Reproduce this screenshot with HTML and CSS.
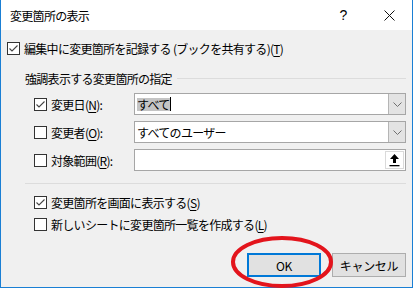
FILE: index.html
```html
<!DOCTYPE html>
<html lang="ja">
<head>
    <meta charset="UTF-8">
    <meta name="viewport" content="width=device-width, initial-scale=1.0">
    <title>変更箇所の表示</title>
    <link rel="stylesheet" href="styles.css">
</head>
<body>

    <div class="dialog">
        <!-- Title bar -->
        <div class="titlebar">
            <span class="title">変更箇所の表示</span>
            <span class="help">?</span>
            <span class="close">
                <svg width="11" height="11" viewBox="0 0 11 11"><path d="M0.5 0.5 L10.5 10.5 M10.5 0.5 L0.5 10.5" stroke="#111" stroke-width="1" fill="none"/></svg>
            </span>
        </div>

        <div class="content">
            <label class="check main-check">
                <span class="box"><svg width="11" height="11" viewBox="0 0 11 11"><path d="M1.5 5.5 L4 8 L9.5 2.5" stroke="#444" stroke-width="1.1" fill="none"/></svg></span>
                編集中に変更箇所を記録する (ブックを共有する)(<u>T</u>)
            </label>

            <!-- Highlight options group -->
            <div class="group-head">
                <span>強調表示する変更箇所の指定</span>
                <span class="rule"></span>
            </div>

            <div class="fields">
                <div class="field">
                    <label class="check field-label">
                        <span class="box"><svg width="11" height="11" viewBox="0 0 11 11"><path d="M1.5 5.5 L4 8 L9.5 2.5" stroke="#444" stroke-width="1.1" fill="none"/></svg></span>
                        変更日(<u>N</u>):
                    </label>
                    <div class="combo">
                        <div class="combo-text"><span class="selected">すべて</span><span class="caret"></span></div>
                        <div class="combo-btn"><svg width="9" height="5" viewBox="0 0 9 5"><path d="M0.5 0.5 L4.5 4.5 L8.5 0.5" stroke="#707070" fill="none"/></svg></div>
                    </div>
                </div>
                <div class="field">
                    <label class="check field-label">
                        <span class="box"></span>
                        変更者(<u>O</u>):
                    </label>
                    <div class="combo">
                        <div class="combo-text">すべてのユーザー</div>
                        <div class="combo-btn"><svg width="9" height="5" viewBox="0 0 9 5"><path d="M0.5 0.5 L4.5 4.5 L8.5 0.5" stroke="#707070" fill="none"/></svg></div>
                    </div>
                </div>
                <div class="field">
                    <label class="check field-label">
                        <span class="box"></span>
                        対象範囲(<u>R</u>):
                    </label>
                    <div class="combo range">
                        <div class="combo-text"></div>
                        <div class="ref-btn"><svg width="11" height="14" viewBox="0 0 11 14"><path d="M5.5 1 L10 6 L7 6 L7 10 L4 10 L4 6 L1 6 Z" fill="#000"/><rect x="0.5" y="12" width="10" height="1.3" fill="#000"/></svg></div>
                    </div>
                </div>
            </div>

            <div class="separator"></div>

            <label class="check opt">
                <span class="box"><svg width="11" height="11" viewBox="0 0 11 11"><path d="M1.5 5.5 L4 8 L9.5 2.5" stroke="#444" stroke-width="1.1" fill="none"/></svg></span>
                変更箇所を画面に表示する(<u>S</u>)
            </label>
            <label class="check opt">
                <span class="box"></span>
                新しいシートに変更箇所一覧を作成する(<u>L</u>)
            </label>

            <div class="buttons">
                <button class="btn default">OK</button>
                <button class="btn">キャンセル</button>
            </div>
        </div>

        <!-- Red circle drawn over the OK button -->
        <svg class="marker" width="106" height="54" viewBox="0 0 106 54">
            <ellipse cx="53" cy="27" rx="49" ry="24" stroke="#e3141c" stroke-width="4" fill="none"/>
        </svg>
    </div>

</body>
</html>
```

FILE: styles.css
```css
* {
    box-sizing: border-box;
}
body {
    margin: 0;
    font-family: "Noto Sans CJK JP", sans-serif;
    font-size: 12px;
    letter-spacing: -0.7px;
    color: #000;
}

/* Window frame */
.dialog {
    position: relative;
    width: 413px;
    height: 288px;
    border: 1px solid #1a7fd4;
    border-top: none;
    background-color: #f0f0f0;
    display: flex;
    flex-direction: column;
}
.titlebar {
    height: 30px;
    flex: none;
    background-color: #fff;
    display: flex;
    align-items: center;
    padding-left: 9px;
}
.titlebar .title {
    flex: 1;
}
.titlebar .help {
    width: 46px;
    text-align: center;
    font-size: 14px;
    font-family: "Liberation Sans", sans-serif;
}
.titlebar .close {
    width: 46px;
    display: flex;
    justify-content: center;
}

/* Body */
.content {
    padding: 8px 6px 0 6px;
    display: flex;
    flex-direction: column;
}
.check {
    display: flex;
    align-items: center;
    white-space: nowrap;
}
.check u {
    text-decoration-thickness: 1px;
    text-underline-offset: 2px;
}
.box {
    width: 13px;
    height: 13px;
    flex: none;
    border: 1px solid #333;
    background-color: #fff;
    margin-right: 4px;
    display: flex;
    align-items: center;
    justify-content: center;
}
.main-check {
    height: 21px;
}

/* Group header with rule */
.group-head {
    margin-top: 9px;
    height: 20px;
    padding-left: 18px;
    display: flex;
    align-items: center;
}
.group-head .rule {
    flex: 1;
    border-top: 1px solid #dcdcdc;
    margin-left: 5px;
}

.fields {
    margin-top: 5px;
    padding-left: 27px;
}
.field {
    height: 22px;
    display: flex;
    align-items: center;
}
.field + .field {
    margin-top: 6px;
}
.field-label {
    width: 100px;
    flex: none;
}
.combo {
    flex: 1;
    height: 22px;
    border: 1px solid #a6a6a6;
    background-color: #fff;
    display: flex;
}
.combo-text {
    flex: 1;
    padding-left: 2px;
    display: flex;
    align-items: center;
}
.combo-text .selected {
    background-color: #c4c4c4;
    line-height: 13px;
}
.combo-text .caret {
    width: 1px;
    height: 14px;
    background-color: #000;
}
.combo-btn {
    width: 17px;
    background-color: #e3e3e3;
    border-left: 1px solid #b5b5b5;
    display: flex;
    align-items: center;
    justify-content: center;
}
.ref-btn {
    width: 19px;
    margin: 1px;
    border: 1px solid #dadada;
    background-color: #fff;
    display: flex;
    align-items: center;
    justify-content: center;
}

.separator {
    margin: 12px 0 0 18px;
    border-top: 1px solid #dcdcdc;
}
.opt {
    height: 22px;
    padding-left: 27px;
}
.separator + .opt {
    margin-top: 7px;
}

/* Buttons */
.buttons {
    margin-top: 18px;
    display: flex;
    justify-content: flex-end;
    gap: 11px;
}
.btn {
    width: 74px;
    height: 24px;
    padding: 0;
    border: 1px solid #adadad;
    background-color: #e1e1e1;
    font-family: "Noto Sans CJK JP", sans-serif;
    font-size: 12px;
    letter-spacing: -0.3px;
    color: #000;
}
.btn.default {
    border: 2px solid #0078d7;
}

.marker {
    position: absolute;
    left: 228px;
    top: 235px;
}
```
